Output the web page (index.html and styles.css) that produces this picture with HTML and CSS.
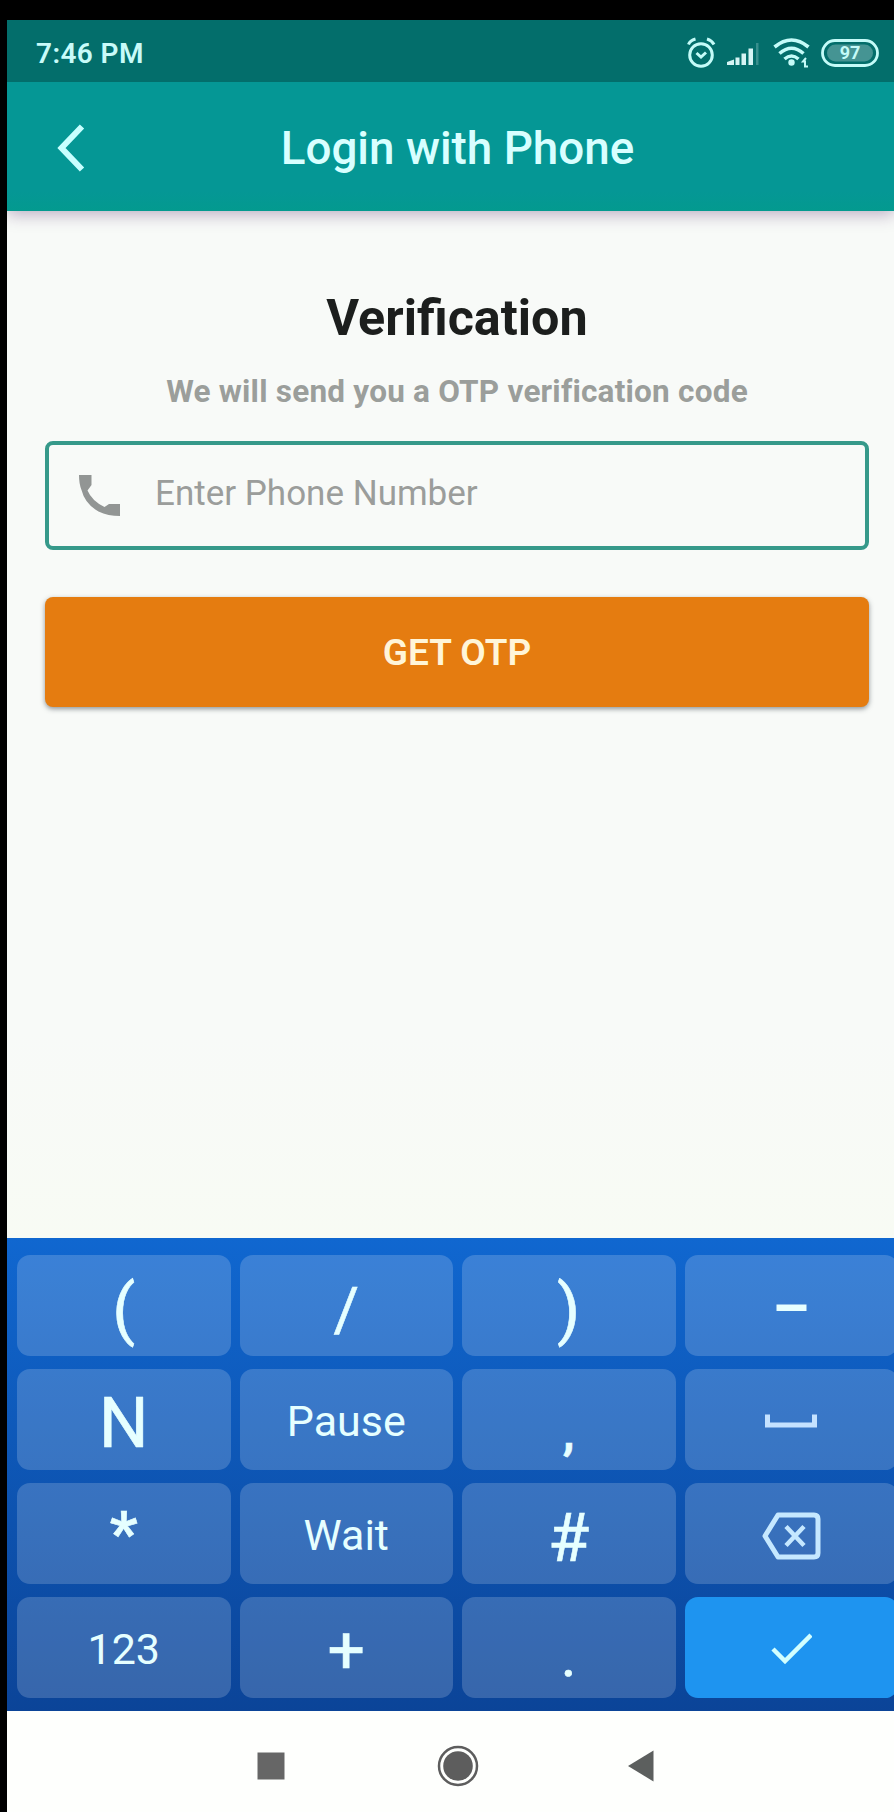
FILE: index.html
```html
<!DOCTYPE html>
<html lang="en">
<head>
<meta charset="utf-8">
<title>Login with Phone</title>
<link rel="stylesheet" href="styles.css">
</head>
<body>
<div class="screen">
  <header class="status">
    <span class="time">7:46 PM</span>
    <svg class="status-icons" width="200" height="36" viewBox="0 0 200 36" fill="none" stroke="#c4fbf8">
      <g stroke-width="3">
        <circle cx="20" cy="20" r="11.300"/>
        <path d="M7.500 9.500Q9 5.500 14.500 4M33 9.500Q31 5.500 26 4M15.500 18l4.500 4 5-4.500"/>
      </g>
      <g fill="#d5f4f4" stroke="none">
        <path d="M46 30v-3l7-2.500v5.500zM54.500 22.500h4v7.500h-4zM60.500 18.500h4.500v11.500h-4.500zM67.500 13.500h4.500v16.500h-4.500z"/>
        <path d="M75 8h2.500v22H75z" opacity=".25"/>
      </g>
      <g stroke-width="3.600">
        <path d="M93.500 12Q110.500 -2 127.500 12M98.500 18.500Q110.500 8 122.500 18.500M103.500 24Q110.500 18 117.500 24"/>
        <circle cx="110.500" cy="27.500" r="3.200" fill="#c4fbf8" stroke="none"/>
        <path d="M125 23l-3 3.500h2v5h3" stroke-width="2"/>
      </g>
      <rect x="141.500" y="5.500" width="55" height="25" rx="12.500" stroke-width="2.800"/>
      <rect x="146" y="9.500" width="46" height="17" rx="8.500" fill="#459493" stroke="none"/>
      <text class="battery" x="169" y="24" text-anchor="middle">97</text>
    </svg>
  </header>

  <div class="appbar">
    <svg class="back" width="30" height="50" viewBox="0 0 30 50" fill="none" stroke="#c8ffff" stroke-width="6"><path d="M26 3.500L5.500 25 26 46.500"/></svg>
    <h1 class="appbar-title">Login with Phone</h1>
  </div>

  <main class="content">
    <h2 class="heading">Verification</h2>
    <p class="sub">We will send you a OTP verification code</p>
    <div class="field">
      <svg class="phone" width="42" height="43" viewBox="0 0 42 43" fill="#929594"><path d="M1 1H13.500V11L9.500 16.500Q14 27 26.500 33L31 30H42V42Q30 42 20.500 37.500Q7 30 3.500 16Q1 10 1 1z"/></svg>
      <span class="hint">Enter Phone Number</span>
    </div>
    <button class="otp">GET OTP</button>
  </main>

  <section class="keyboard">
    <div class="key"><span class="sym">(</span></div>
    <div class="key"><span class="sym slash">/</span></div>
    <div class="key"><span class="sym">)</span></div>
    <div class="key"><svg width="60" height="30" viewBox="0 0 60 30"><path d="M15.500 13.500h30v6.500h-30z" fill="#e8ffff"/></svg></div>

    <div class="key"><span class="sym letter">N</span></div>
    <div class="key"><span class="word">Pause</span></div>
    <div class="key"><span class="sym comma">,</span></div>
    <div class="key"><svg class="space" width="54" height="16" viewBox="0 0 54 16" fill="none" stroke="#c5e2ff" stroke-width="5"><path d="M3.500 1.500v10.500h47V1.500"/></svg></div>

    <div class="key"><span class="sym star">*</span></div>
    <div class="key"><span class="word">Wait</span></div>
    <div class="key"><span class="sym hash">#</span></div>
    <div class="key"><svg class="erase" width="60" height="48" viewBox="0 0 60 48" fill="none" stroke="#c5e8ff" stroke-width="5" stroke-linejoin="round"><path d="M17 3h36q4 0 4 4v34q0 4-4 4H17L4 24z"/><path d="M25 14.500l18 19M43 14.500l-18 19" stroke-width="4.500"/></svg></div>

    <div class="key"><span class="word">123</span></div>
    <div class="key"><span class="sym plus">+</span></div>
    <div class="key"><span class="sym dot">.</span></div>
    <div class="key done"><svg width="42" height="34" viewBox="0 0 42 34" fill="none" stroke="#d2ffff" stroke-width="4.500"><path d="M3 18l12 12L41 4"/></svg></div>
  </section>

  <nav class="nav">
    <svg width="28" height="28" viewBox="0 0 28 28"><path d="M.5.5h27v27H.5z" fill="#666"/></svg>
    <svg width="42" height="42" viewBox="0 0 42 42"><circle cx="21" cy="21" r="19" fill="none" stroke="#5d5d5d" stroke-width="2.500"/><circle cx="21" cy="21" r="14.800" fill="#5d5d5d"/></svg>
    <svg width="26" height="32" viewBox="0 0 26 32"><path d="M0 16L25.500.5v31z" fill="#5c5f5e"/></svg>
  </nav>
</div>
</body>
</html>
```
FILE: styles.css
```css
* { box-sizing: border-box; }
body {
  margin: 0;
  height: 1812px;
  padding: 20px 0 0 7px;
  background: #000;
  font-family: Roboto, sans-serif;
  overflow: hidden;
}
h1, h2, p { margin: 0; }
svg { display: block; flex: none; }
.screen {
  width: 887px;
  height: 1792px;
  display: flex;
  flex-direction: column;
  overflow: hidden;
  background: #f8faf8;
}
.status {
  height: 62px;
  flex: none;
  display: flex;
  align-items: center;
  justify-content: space-between;
  padding: 3px 13px 0 29px;
  background: #036e6b;
  z-index: 2;
}
.time {
  padding-top: 1px;
  font-size: 28px;
  font-weight: 600;
  letter-spacing: .4px;
  color: #c8fbf9;
}
.battery {
  font: 700 18px Roboto, sans-serif;
  fill: #c4fbf8;
  stroke: none;
}
.appbar {
  height: 129px;
  flex: none;
  display: grid;
  grid-template-columns: 102px 697px;
  align-items: center;
  padding-top: 2px;
  background: linear-gradient(#059795 85%, #039a8f);
  box-shadow: 0 3px 16px rgba(60, 20, 90, .35);
  z-index: 1;
}
.back { margin-left: 49px; }
.appbar-title {
  padding-top: 3px;
  text-align: center;
  font-size: 45.800px;
  line-height: 60px;
  font-weight: 500;
  color: #d8ffff;
}
.content {
  height: 1027px;
  flex: none;
  display: flex;
  flex-direction: column;
  padding: 77px 25px 0 38px;
  background: linear-gradient(#f8faf8 80%, #f8fbf4);
}
.heading {
  text-align: center;
  font-size: 50.300px;
  line-height: 60px;
  font-weight: 700;
  color: #1c1e1d;
}
.sub {
  margin-top: 24px;
  text-align: center;
  font-size: 31.500px;
  letter-spacing: .22px;
  line-height: 40px;
  font-weight: 700;
  color: #9b9e9b;
  white-space: nowrap;
}
.field {
  height: 109px;
  margin-top: 29px;
  display: flex;
  align-items: center;
  gap: 35px;
  padding-left: 29px;
  border: 4px solid #36998a;
  border-radius: 8px;
}
.hint {
  font-size: 35px;
  line-height: 42px;
  color: #9b9d9b;
  margin-top: -4px;
}
.otp {
  height: 110px;
  margin-top: 47px;
  padding-top: 3px;
  border: 0;
  border-radius: 8px;
  background: #e57c10;
  box-shadow: 0 2px 5px rgba(40, 50, 60, .5);
  font: 600 37px/44px Roboto, sans-serif;
  color: #fff5d8;
}
.keyboard {
  height: 473px;
  flex: none;
  display: grid;
  grid-template-columns: repeat(4, 213.500px);
  grid-auto-rows: 101px;
  gap: 13px 9px;
  padding: 17px 0 0 10px;
  background: linear-gradient(#1067d0, #0b4498);
}
.key {
  display: flex;
  align-items: center;
  justify-content: center;
  border-radius: 13px;
  background: rgba(255, 255, 255, .18);
  color: #e6ffff;
}
.done { background: #1e94f0; }
.sym {
  padding-top: 6px;
  font-size: 67px;
  line-height: 80px;
  font-weight: 400;
  -webkit-text-stroke: .6px currentColor;
}
.slash { font-size: 62px; padding-top: 8px; }
.letter { font-size: 70px; }
.comma { font-size: 48px; font-weight: 700; padding-top: 26px; }
.star { font-size: 62px; font-weight: 600; padding-top: 0; }
.hash { padding-top: 8px; }
.plus { font-size: 66px; padding-top: 7px; }
.dot { font-size: 60px; padding-top: 16px; }
.word { padding-top: 3px; font-size: 43px; line-height: 50px; }
.space { margin-top: 3px; }
.erase { margin-top: 5px; }
.nav {
  flex: 1;
  display: flex;
  align-items: center;
  gap: 152px;
  padding: 8px 0 0 250px;
  background: #fefffd;
}
.nav svg:last-child { margin-left: -3px; }
```
